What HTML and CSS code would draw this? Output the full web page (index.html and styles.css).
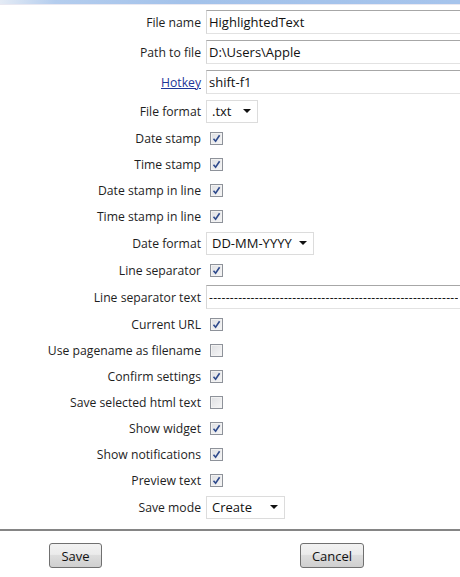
FILE: index.html
```html
<!DOCTYPE html>
<html lang="en">
<head>
  <meta charset="UTF-8">
  <title>Settings</title>
  <link rel="stylesheet" href="styles.css">
</head>
<body>
  <div class="topbar"></div>

  <form class="settings">
    <div class="row wide">
      <label class="lbl">File name</label>
      <input class="text" type="text" value="HighlightedText">
    </div>
    <div class="row wide">
      <label class="lbl">Path to file</label>
      <input class="text" type="text" value="D:\Users\Apple">
    </div>
    <div class="row wide">
      <label class="lbl"><a href="#">Hotkey</a></label>
      <input class="text" type="text" value="shift-f1">
    </div>
    <div class="row field">
      <label class="lbl">File format</label>
      <div class="select fmt"><span>.txt</span><i class="arrow"></i></div>
    </div>
    <div class="row">
      <label class="lbl">Date stamp</label>
      <span class="cb on"><svg viewBox="0 0 9 9"><path d="M1.5 4.8 L3.6 7.2 L7.6 1.2"/></svg></span>
    </div>
    <div class="row">
      <label class="lbl">Time stamp</label>
      <span class="cb on"><svg viewBox="0 0 9 9"><path d="M1.5 4.8 L3.6 7.2 L7.6 1.2"/></svg></span>
    </div>
    <div class="row">
      <label class="lbl">Date stamp in line</label>
      <span class="cb on"><svg viewBox="0 0 9 9"><path d="M1.5 4.8 L3.6 7.2 L7.6 1.2"/></svg></span>
    </div>
    <div class="row">
      <label class="lbl">Time stamp in line</label>
      <span class="cb on"><svg viewBox="0 0 9 9"><path d="M1.5 4.8 L3.6 7.2 L7.6 1.2"/></svg></span>
    </div>
    <div class="row field">
      <label class="lbl">Date format</label>
      <div class="select date"><span>DD-MM-YYYY</span><i class="arrow"></i></div>
    </div>
    <div class="row">
      <label class="lbl">Line separator</label>
      <span class="cb on"><svg viewBox="0 0 9 9"><path d="M1.5 4.8 L3.6 7.2 L7.6 1.2"/></svg></span>
    </div>
    <div class="row field">
      <label class="lbl">Line separator text</label>
      <input class="text dashes" type="text" value="--------------------------------------------------------------">
    </div>
    <div class="row">
      <label class="lbl">Current URL</label>
      <span class="cb on"><svg viewBox="0 0 9 9"><path d="M1.5 4.8 L3.6 7.2 L7.6 1.2"/></svg></span>
    </div>
    <div class="row">
      <label class="lbl">Use pagename as filename</label>
      <span class="cb"></span>
    </div>
    <div class="row">
      <label class="lbl">Confirm settings</label>
      <span class="cb on"><svg viewBox="0 0 9 9"><path d="M1.5 4.8 L3.6 7.2 L7.6 1.2"/></svg></span>
    </div>
    <div class="row">
      <label class="lbl">Save selected html text</label>
      <span class="cb"></span>
    </div>
    <div class="row">
      <label class="lbl">Show widget</label>
      <span class="cb on"><svg viewBox="0 0 9 9"><path d="M1.5 4.8 L3.6 7.2 L7.6 1.2"/></svg></span>
    </div>
    <div class="row">
      <label class="lbl">Show notifications</label>
      <span class="cb on"><svg viewBox="0 0 9 9"><path d="M1.5 4.8 L3.6 7.2 L7.6 1.2"/></svg></span>
    </div>
    <div class="row">
      <label class="lbl">Preview text</label>
      <span class="cb on"><svg viewBox="0 0 9 9"><path d="M1.5 4.8 L3.6 7.2 L7.6 1.2"/></svg></span>
    </div>
    <div class="row field">
      <label class="lbl">Save mode</label>
      <div class="select mode"><span>Create</span><i class="arrow"></i></div>
    </div>
  </form>

  <div class="sep"></div>

  <div class="actions">
    <button type="button" class="btn save">Save</button>
    <button type="button" class="btn cancel">Cancel</button>
  </div>
</body>
</html>
```

FILE: styles.css
```css
* {
  margin: 0;
  padding: 0;
  box-sizing: border-box;
}
body {
  font-family: "Open Sans", "Noto Sans", sans-serif;
  font-size: 12px;
  color: #1e1e1e;
  background-color: #fff;
  overflow: hidden;
}
.topbar {
  height: 5px;
  background: linear-gradient(to right, #e4ebf5 0%, #b4cdee 12%, #a3c2ea 40%, #a6c4ec 100%);
  border-bottom: 1px solid #e9e8f1;
}
.settings {
  padding-top: 2px;
  overflow: hidden;
}
.row {
  display: flex;
  align-items: center;
  height: 26px;
}
.row.field {
  height: 28px;
}
.row.wide {
  height: 30px;
}
.lbl {
  width: 201px;
  flex-shrink: 0;
  text-align: right;
  margin-right: 5px;
  white-space: nowrap;
  font-size: 12.2px;
}
.lbl a {
  color: #1d3598;
  text-decoration: underline;
}
.text {
  width: 254px;
  height: 24px;
  flex-shrink: 0;
  border: 1px solid;
  border-right: none;
  border-color: #a7a7a7 #d6d6d6 #e2e2e2 #d6d6d6;
  padding: 0 2px;
  font-family: "Open Sans", "Noto Sans", sans-serif;
  font-size: 13px;
  color: #111;
  background: #fff;
  outline: none;
}
.text.dashes {
  font-size: 12px;
  letter-spacing: 0.3px;
}
.select {
  display: flex;
  align-items: center;
  justify-content: space-between;
  height: 23px;
  border: 1px solid #dcdcdc;
  padding: 0 6px 0 5px;
  font-size: 13px;
  color: #111;
  background: #fff;
}
.select.fmt {
  width: 52px;
}
.select.date {
  width: 108px;
}
.select.mode {
  width: 79px;
}
.arrow {
  width: 0;
  height: 0;
  border-left: 4px solid transparent;
  border-right: 4px solid transparent;
  border-top: 4px solid #111;
}
.cb {
  width: 13px;
  height: 13px;
  margin-left: 4px;
  border: 1px solid #8e929a;
  background: linear-gradient(135deg, #dedfe2 0%, #f6f6f7 100%);
  box-shadow: inset 0 0 0 1px #f2f2f2;
  display: flex;
  align-items: center;
  justify-content: center;
}
.cb svg {
  width: 9px;
  height: 9px;
}
.cb svg path {
  fill: none;
  stroke: #2e4a8c;
  stroke-width: 1.6;
}
.sep {
  margin-top: 8px;
  height: 2px;
  background-color: #858585;
}
.actions {
  display: flex;
  gap: 198px;
  padding-left: 49px;
  margin-top: 12px;
}
.btn {
  height: 25px;
  border: 1px solid #707070;
  border-radius: 3px;
  background: linear-gradient(to bottom, #f2f2f2 0%, #ebebeb 45%, #dddddd 50%, #cfcfcf 100%);
  font-family: "Open Sans", "Noto Sans", sans-serif;
  font-size: 13px;
  color: #111;
  cursor: pointer;
}
.btn.save {
  width: 53px;
}
.btn.cancel {
  width: 64px;
}
```
